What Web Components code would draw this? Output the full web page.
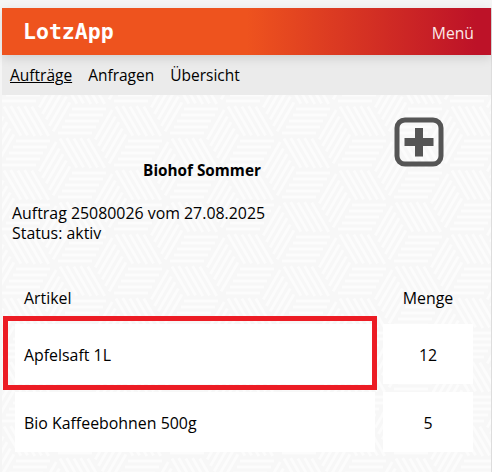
<!DOCTYPE html>
<html lang="de">
<head>
<meta charset="utf-8">
<title>LotzApp</title>
<style>
  html, body { margin: 0; height: 100%; overflow: hidden; background: #f5f5f5; }
  body { font-family: "Open Sans", "Noto Sans", sans-serif; color: #000; }
</style>
</head>
<body>
<lotz-app>
  <lotz-header slot="header" brand="LotzApp" menu="Menü"></lotz-header>
  <lotz-nav slot="nav">
    <a class="active">Aufträge</a>
    <a>Anfragen</a>
    <a>Übersicht</a>
  </lotz-nav>
  <lotz-order customer="Biohof Sommer" number="25080026" date="27.08.2025" status="aktiv">
    <order-row header name="Artikel" amount="Menge"></order-row>
    <order-row name="Apfelsaft 1L" amount="12" marked></order-row>
    <order-row name="Bio Kaffeebohnen 500g" amount="5"></order-row>
  </lotz-order>
</lotz-app>

<script>
// Define templates.
const appTemplate = document.createElement('template')
appTemplate.innerHTML = `
<style>
  :host { display: flex; flex-direction: column; height: 464px; margin: 8px 0 0 2px; width: 489px; border-right: 1px solid #ddd; }
  #body { flex: 1; position: relative; overflow: hidden; }
  svg { position: absolute; inset: 0; width: 100%; height: 100%; }
  #content { position: relative; }
</style>
<slot name="header"></slot>
<slot name="nav"></slot>
<div id="body">
  <svg aria-hidden="true">
    <defs>
      <g id="piece" fill="none" stroke="#fcfcfc" stroke-width="3">
        <path d="M-1 4H33M-4 10H30M-8 16H26M-11 22H23M-15 28H19"/>
      </g>
      <g id="cell">
        <use href="#piece"/>
        <use href="#piece" transform="rotate(120)"/>
        <use href="#piece" transform="rotate(240)"/>
      </g>
      <pattern id="hex" patternUnits="userSpaceOnUse" width="112" height="64" patternTransform="translate(15 42)">
        <rect width="112" height="64" fill="#f7f7f7"/>
        <use href="#cell"/>
        <use href="#cell" x="112"/>
        <use href="#cell" y="64"/>
        <use href="#cell" x="112" y="64"/>
        <use href="#cell" x="56" y="32"/>
        <use href="#cell" x="56" y="-32"/>
        <use href="#cell" x="56" y="96"/>
      </pattern>
    </defs>
    <rect width="100%" height="100%" fill="url(#hex)"/>
  </svg>
  <div id="content"><slot></slot></div>
</div>
`

const headerTemplate = document.createElement('template')
headerTemplate.innerHTML = `
<style>
  :host { display: flex; align-items: center; justify-content: space-between; height: 47px; padding: 0 17px 0 21px; box-sizing: border-box;
    background: linear-gradient(90deg, #ee531e 0%, #ee531e 50%, #bd1228 97%); box-shadow: 0 3px 10px rgba(0, 0, 0, .12); position: relative; z-index: 1; }
  #brand { font: bold 21.5px "DejaVu Sans Mono", monospace; color: #fff; }
  #menu { font-size: 15.7px; color: #fbeaea; padding-top: 2px; }
</style>
<span id="brand"></span>
<span id="menu"></span>
`

const navTemplate = document.createElement('template')
navTemplate.innerHTML = `
<style>
  :host { display: flex; align-items: center; gap: 16px; height: 40px; padding: 0 8px; box-sizing: border-box; background: #ebebeb; font-size: 15.5px; }
  ::slotted(a) { color: #000; }
  ::slotted(a.active) { text-decoration: underline; }
</style>
<slot></slot>
`

const orderTemplate = document.createElement('template')
orderTemplate.innerHTML = `
<style>
  :host { display: block; font-size: 15.9px; line-height: 20px; }
  #top { display: flex; align-items: flex-end; padding: 22px 47px 0 10px; }
  #customer { flex: 1; text-align: center; font-weight: 700; font-size: 15.3px; margin: 0 2px -13px 0; }
  #info { margin: 36px 10px 0; }
  #rows { display: block; margin-top: 35px; padding-left: 13px; }
  svg { display: block; width: 50px; height: 50px; }
</style>
<div id="top">
  <div id="customer"></div>
  <svg viewBox="0 0 50 50" aria-hidden="true">
    <rect x="3" y="3" width="44" height="44" rx="8" fill="none" stroke="#555" stroke-width="5"/>
    <path d="M10.500 25H39.500M25 11V39.500" fill="none" stroke="#555" stroke-width="8"/>
  </svg>
</div>
<div id="info">
  <div id="order"></div>
  <div id="status"></div>
</div>
<div id="rows"><slot></slot></div>
`

const rowTemplate = document.createElement('template')
rowTemplate.innerHTML = `
<style>
  :host { display: grid; grid-template-columns: 360px 90px; column-gap: 8px; margin-bottom: 8px; position: relative; }
  div { display: flex; align-items: center; height: 60px; padding-top: 2px; box-sizing: border-box; background: #fff; }
  #name { padding-left: 9px; }
  #amount { justify-content: center; }
  :host([header]) { margin-bottom: 6px; }
  :host([header]) div { background: none; height: 40px; padding-top: 0; }
  #mark { display: none; }
  :host([marked]) #mark { display: block; position: absolute; left: -12px; top: -8px; width: 374px; height: 74px; padding: 0; background: none; border: 5px solid #ec1c24; }
</style>
<div id="name"></div>
<div id="amount"></div>
<div id="mark"></div>
`

customElements.define('lotz-app',
  /**
   * The page frame with header, navigation and patterned body.
   */
  class extends HTMLElement {
    /**
     * Creates an instance of the current type.
     */
    constructor () {
      super()
      this.attachShadow({ mode: 'open' }).appendChild(appTemplate.content.cloneNode(true))
    }
  })

customElements.define('lotz-header',
  /**
   * The coloured bar with the brand and the menu link.
   */
  class extends HTMLElement {
    /**
     * Creates an instance of the current type.
     */
    constructor () {
      super()
      this.attachShadow({ mode: 'open' }).appendChild(headerTemplate.content.cloneNode(true))
    }

    /**
     * Called after the element is inserted into the DOM.
     */
    connectedCallback () {
      this.shadowRoot.querySelector('#brand').textContent = this.getAttribute('brand')
      this.shadowRoot.querySelector('#menu').textContent = this.getAttribute('menu')
    }
  })

customElements.define('lotz-nav',
  /**
   * The row of navigation links.
   */
  class extends HTMLElement {
    /**
     * Creates an instance of the current type.
     */
    constructor () {
      super()
      this.attachShadow({ mode: 'open' }).appendChild(navTemplate.content.cloneNode(true))
    }
  })

customElements.define('lotz-order',
  /**
   * One order with its customer, details and rows.
   */
  class extends HTMLElement {
    /**
     * Creates an instance of the current type.
     */
    constructor () {
      super()
      this.attachShadow({ mode: 'open' }).appendChild(orderTemplate.content.cloneNode(true))
    }

    /**
     * Called after the element is inserted into the DOM.
     */
    connectedCallback () {
      const root = this.shadowRoot
      root.querySelector('#customer').textContent = this.getAttribute('customer')
      root.querySelector('#order').textContent = `Auftrag ${this.getAttribute('number')} vom ${this.getAttribute('date')}`
      root.querySelector('#status').textContent = `Status: ${this.getAttribute('status')}`
    }
  })

customElements.define('order-row',
  /**
   * One table row: article name and amount.
   */
  class extends HTMLElement {
    /**
     * Creates an instance of the current type.
     */
    constructor () {
      super()
      this.attachShadow({ mode: 'open' }).appendChild(rowTemplate.content.cloneNode(true))
    }

    /**
     * Called after the element is inserted into the DOM.
     */
    connectedCallback () {
      this.shadowRoot.querySelector('#name').textContent = this.getAttribute('name')
      this.shadowRoot.querySelector('#amount').textContent = this.getAttribute('amount')
    }
  })
</script>
</body>
</html>
